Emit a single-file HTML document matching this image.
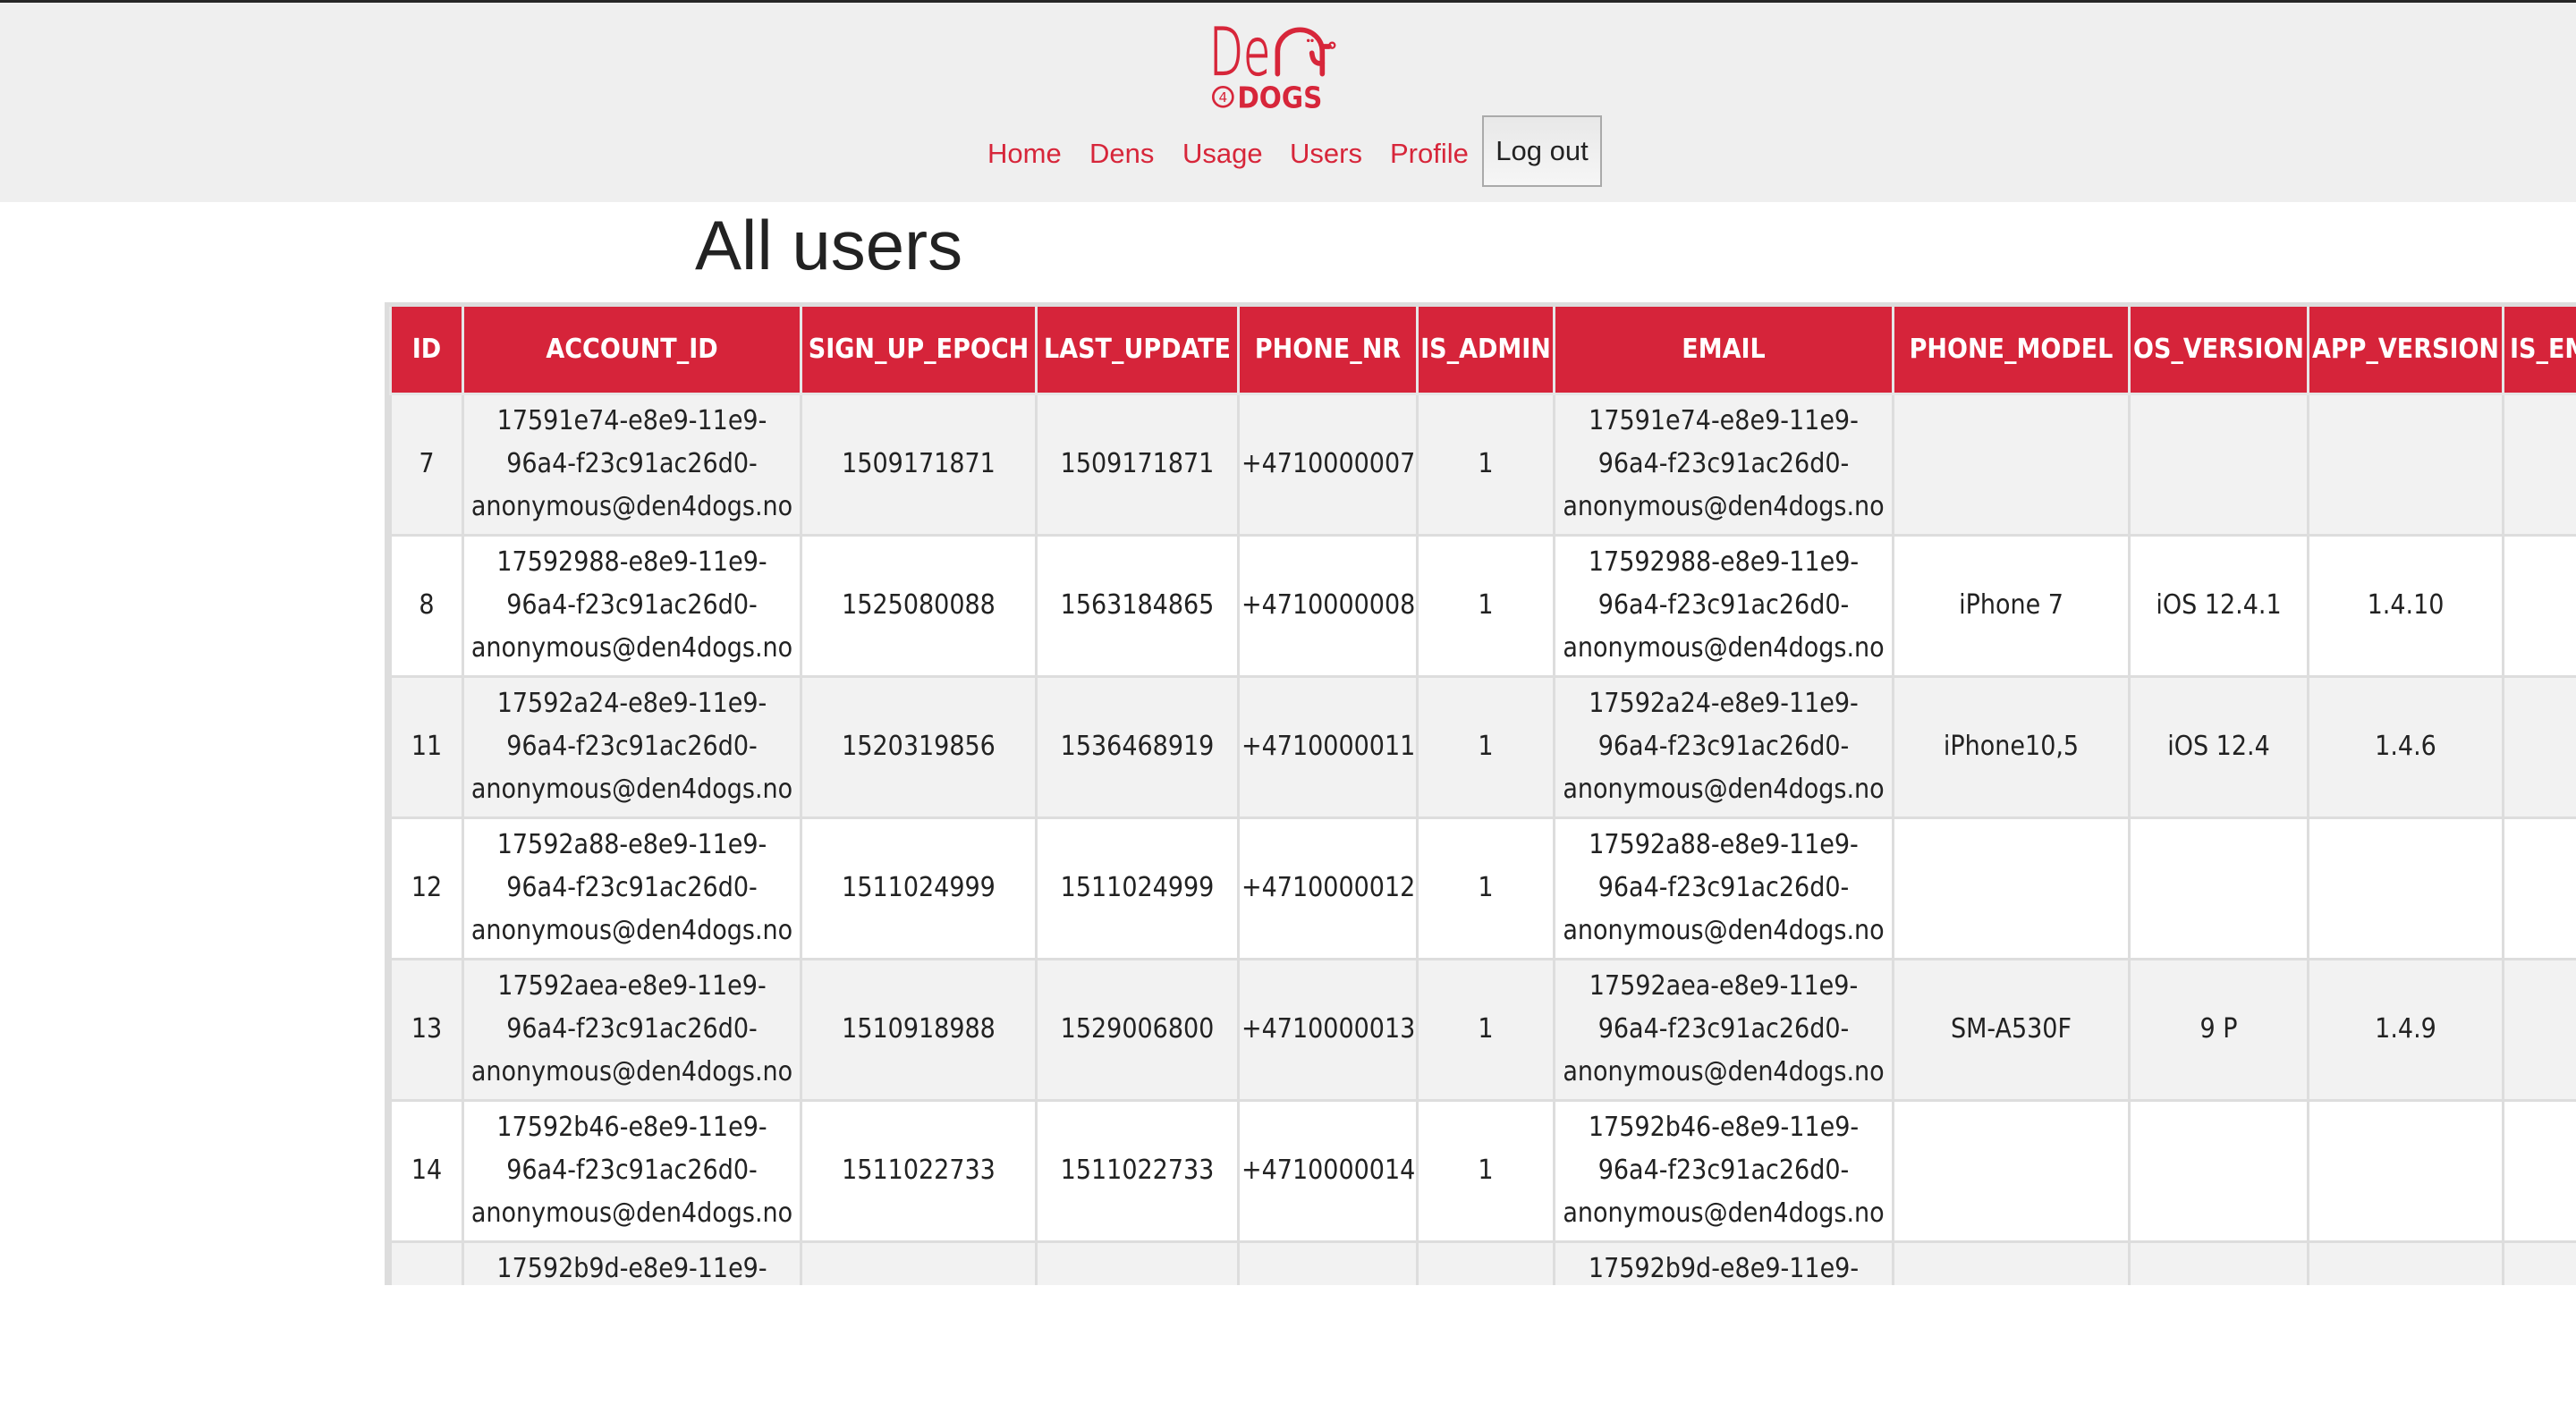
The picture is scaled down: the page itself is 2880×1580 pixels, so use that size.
<!DOCTYPE html>
<html><head><meta charset="utf-8">
<style>
*{margin:0;padding:0;box-sizing:border-box}
html,body{width:2880px;height:1580px;overflow:hidden;background:#fff}
body{position:relative;font-family:"Liberation Sans",sans-serif}
.top{position:absolute;left:0;top:0;width:2880px;height:3px;background:#262626}
.hdr{position:absolute;left:0;top:3px;width:2880px;height:223px;background:#efefef}
.logo{position:absolute;left:1340px;top:20px}
.nav a{position:absolute;top:154px;font-size:31px;color:#d7263a;text-decoration:none;line-height:36px}
.btn{position:absolute;left:1657px;top:129px;width:134px;height:80px;border:2px solid #aaa;background:linear-gradient(#e8e8e8,#f6f6f6);font-size:31px;color:#222;text-align:center;line-height:76px}
h1{position:absolute;left:777px;top:226px;font-size:78px;font-weight:normal;color:#222;line-height:96px}
.wrap{position:absolute;left:430px;top:338px;width:2450px;height:1099px;overflow:hidden;background:#ddd;padding:5px 0 0 5px}
table{border-collapse:collapse;table-layout:fixed;width:2700px;font-family:"DejaVu Sans Condensed","DejaVu Sans",sans-serif;font-stretch:condensed;font-size:30px;color:#222}
td,th{border:3px solid #ddd;text-align:center;vertical-align:middle;padding:0 2px;line-height:48px;overflow:hidden;white-space:normal;word-break:normal}
th{background:#d6243a;color:#fff;height:97px;font-weight:bold;font-size:30px;white-space:nowrap;border-color:#e6e6e6;border-top:none}
td{height:158px}
tr.o td{background:#f2f2f2}
tr.e td{background:#fff}
</style></head><body>
<div class="top"></div>
<div class="hdr"></div>
<svg class="logo" width="170" height="110" viewBox="0 0 510 330">
  <text x="36" y="190" font-family="DejaVu Sans" font-weight="200" font-size="220" fill="#d7263a" stroke="#d7263a" stroke-width="4" textLength="205" lengthAdjust="spacingAndGlyphs">De</text>
  <g fill="none" stroke="#d7263a" stroke-width="17" stroke-linecap="round">
    <path d="M265 188 V112 A75 72 0 0 1 415 112 V188"/>
    <path d="M415 96 H438"/>
    <circle cx="448" cy="92" r="9" stroke-width="7"/>
    <path d="M380 118 Q384 158 415 152"/>
  </g>
  <circle cx="368" cy="76" r="5" fill="#d7263a"/>
  <circle cx="381" cy="76" r="5" fill="#d7263a"/>
  <circle cx="82" cy="265" r="33" fill="none" stroke="#d7263a" stroke-width="8"/>
  <text x="82" y="282" text-anchor="middle" font-family="DejaVu Sans" font-size="46" fill="#d7263a">4</text>
  <text x="130" y="302" font-family="DejaVu Sans" font-weight="bold" font-size="100" fill="#d7263a" textLength="285" lengthAdjust="spacingAndGlyphs">DOGS</text>
</svg>
<div class="nav">
  <a style="left:1104px">Home</a>
  <a style="left:1218px">Dens</a>
  <a style="left:1322px">Usage</a>
  <a style="left:1442px">Users</a>
  <a style="left:1554px">Profile</a>
</div>
<div class="btn">Log out</div>
<h1>All users</h1>
<div class="wrap">
<table>
<colgroup>
<col style="width:81px"><col style="width:378px"><col style="width:263px"><col style="width:226px"><col style="width:200px"><col style="width:153px"><col style="width:379px"><col style="width:264px"><col style="width:200px"><col style="width:218px"><col style="width:338px">
</colgroup>
<tr><th>ID</th><th>ACCOUNT_ID</th><th>SIGN_UP_EPOCH</th><th>LAST_UPDATE</th><th>PHONE_NR</th><th>IS_ADMIN</th><th>EMAIL</th><th>PHONE_MODEL</th><th>OS_VERSION</th><th>APP_VERSION</th><th style="text-align:left;padding-left:6px">IS_EMAIL_VERIFIED</th></tr>
<tr class="o"><td>7</td><td>17591e74-e8e9-11e9-<br>96a4-f23c91ac26d0-<br>anonymous@den4dogs.no</td><td>1509171871</td><td>1509171871</td><td>+4710000007</td><td>1</td><td>17591e74-e8e9-11e9-<br>96a4-f23c91ac26d0-<br>anonymous@den4dogs.no</td><td></td><td></td><td></td><td></td></tr>
<tr class="e"><td>8</td><td>17592988-e8e9-11e9-<br>96a4-f23c91ac26d0-<br>anonymous@den4dogs.no</td><td>1525080088</td><td>1563184865</td><td>+4710000008</td><td>1</td><td>17592988-e8e9-11e9-<br>96a4-f23c91ac26d0-<br>anonymous@den4dogs.no</td><td>iPhone 7</td><td>iOS 12.4.1</td><td>1.4.10</td><td></td></tr>
<tr class="o"><td>11</td><td>17592a24-e8e9-11e9-<br>96a4-f23c91ac26d0-<br>anonymous@den4dogs.no</td><td>1520319856</td><td>1536468919</td><td>+4710000011</td><td>1</td><td>17592a24-e8e9-11e9-<br>96a4-f23c91ac26d0-<br>anonymous@den4dogs.no</td><td>iPhone10,5</td><td>iOS 12.4</td><td>1.4.6</td><td></td></tr>
<tr class="e"><td>12</td><td>17592a88-e8e9-11e9-<br>96a4-f23c91ac26d0-<br>anonymous@den4dogs.no</td><td>1511024999</td><td>1511024999</td><td>+4710000012</td><td>1</td><td>17592a88-e8e9-11e9-<br>96a4-f23c91ac26d0-<br>anonymous@den4dogs.no</td><td></td><td></td><td></td><td></td></tr>
<tr class="o"><td>13</td><td>17592aea-e8e9-11e9-<br>96a4-f23c91ac26d0-<br>anonymous@den4dogs.no</td><td>1510918988</td><td>1529006800</td><td>+4710000013</td><td>1</td><td>17592aea-e8e9-11e9-<br>96a4-f23c91ac26d0-<br>anonymous@den4dogs.no</td><td>SM-A530F</td><td>9 P</td><td>1.4.9</td><td></td></tr>
<tr class="e"><td>14</td><td>17592b46-e8e9-11e9-<br>96a4-f23c91ac26d0-<br>anonymous@den4dogs.no</td><td>1511022733</td><td>1511022733</td><td>+4710000014</td><td>1</td><td>17592b46-e8e9-11e9-<br>96a4-f23c91ac26d0-<br>anonymous@den4dogs.no</td><td></td><td></td><td></td><td></td></tr>
<tr class="o"><td>15</td><td>17592b9d-e8e9-11e9-<br>96a4-f23c91ac26d0-<br>anonymous@den4dogs.no</td><td>1511022733</td><td>1511022733</td><td>+4710000015</td><td>1</td><td>17592b9d-e8e9-11e9-<br>96a4-f23c91ac26d0-<br>anonymous@den4dogs.no</td><td></td><td></td><td></td><td></td></tr>
</table>
</div>
</body></html>
